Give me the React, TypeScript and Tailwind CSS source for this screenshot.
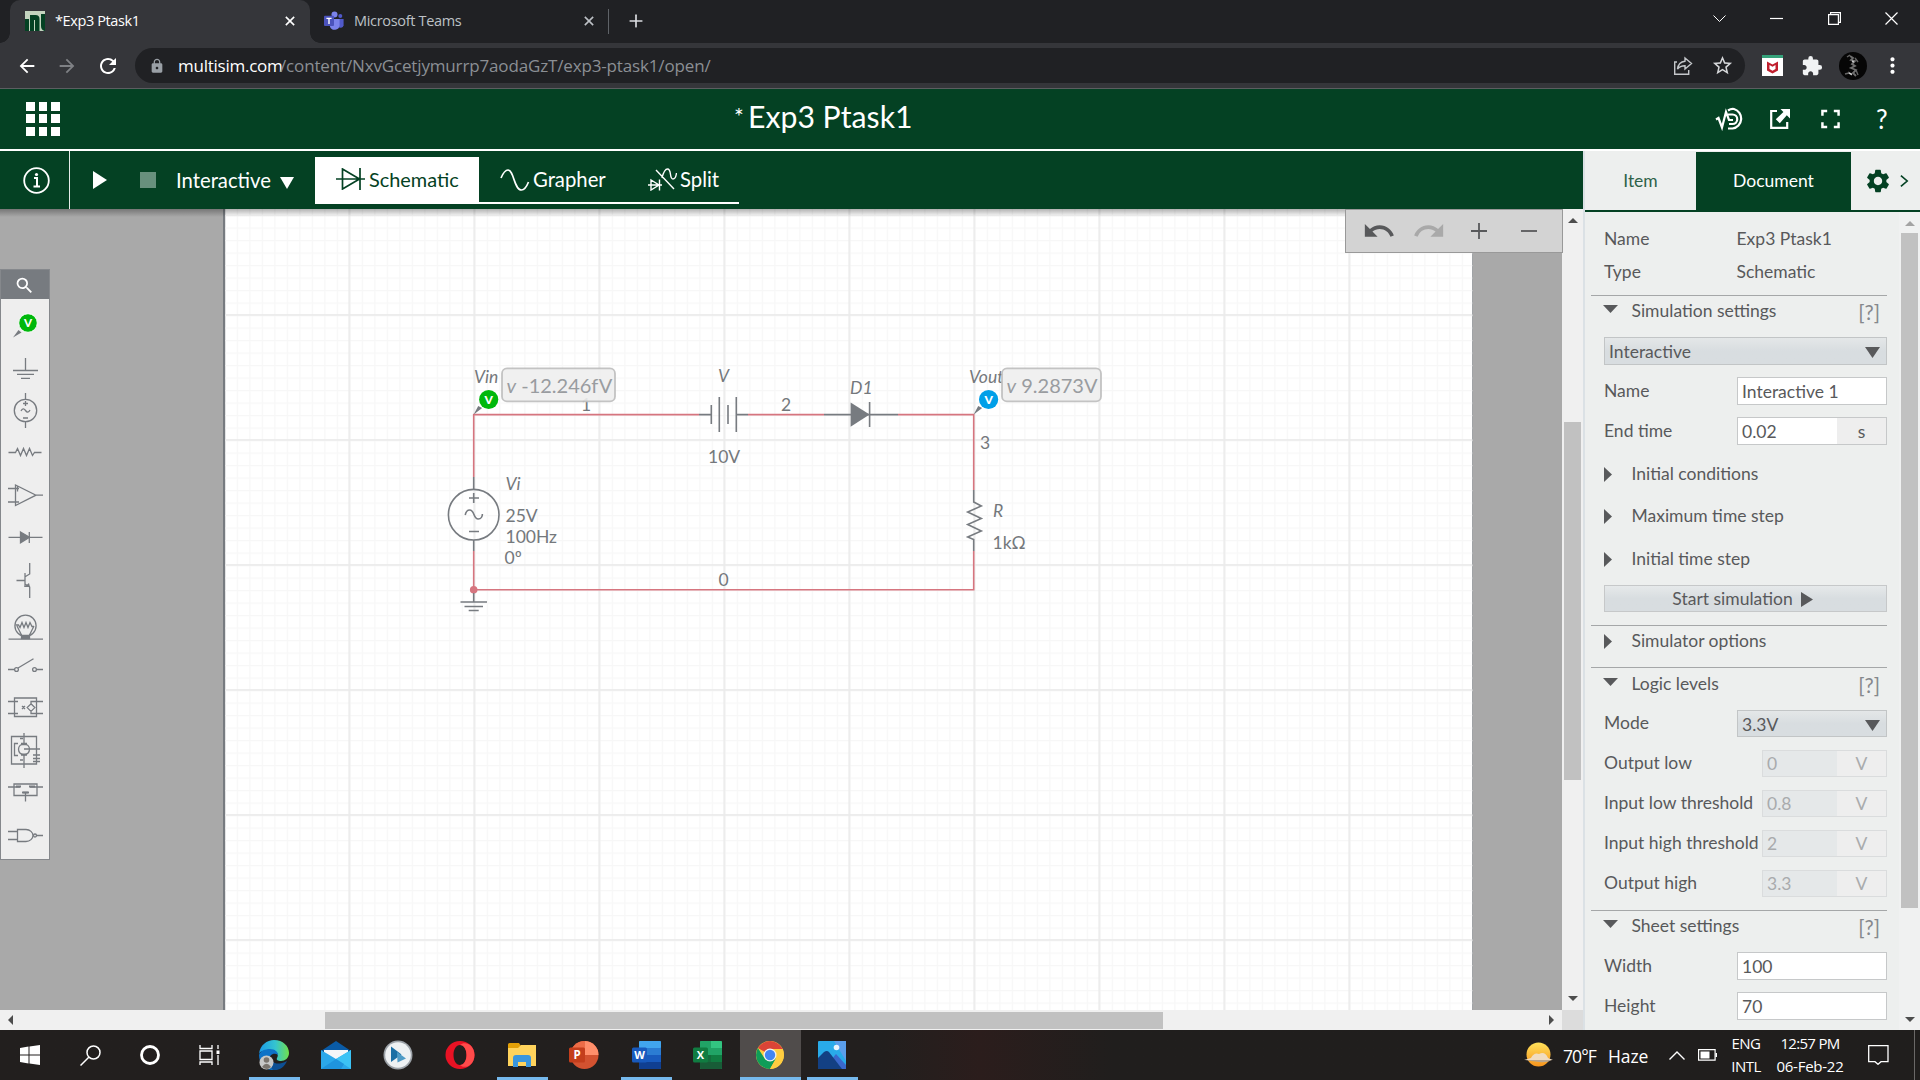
import React from "react";
import { LuPlus } from "react-icons/lu";
import { MdArrowBack, MdArrowForward, MdRefresh, MdLock, MdStarBorder, MdExtension, MdMoreVert, MdUndo, MdRedo, MdSettings, MdSearch } from "react-icons/md";

const UI = "font-['Open_Sans',sans-serif]";
const LATO = "font-['Lato',sans-serif]";

/* ---------- browser chrome ---------- */

function CloseX({ className }: { className: string }) {
  return (
    <svg className={className} viewBox="0 0 12 12" fill="none" stroke="currentColor" strokeWidth="1.9">
      <path d="M1 1l10 10M11 1L1 11" />
    </svg>
  );
}

function TeamsIcon() {
  return (
    <svg className="h-5 w-5" viewBox="0 0 20 20">
      <circle cx="16.3" cy="5" r="2" fill="#5059c9" />
      <path d="M14 8h5.6v6.2a3 3 0 0 1-5.6 1z" fill="#5059c9" />
      <circle cx="10.5" cy="3.4" r="3" fill="#7b83eb" />
      <path d="M6 8h9.6v6.5a5 5 0 0 1-9.6 1.2z" fill="#7b83eb" />
      <rect x="0" y="4.7" width="10" height="10.3" rx="1" fill="#4b53bc" />
      <path d="M2.4 7.4h5.2M5 7.4v5.6" stroke="#fff" strokeWidth="1.4" />
    </svg>
  );
}

function TabStrip() {
  return (
    <div className={`flex h-[43px] items-center bg-[#202124] ${UI} text-[14.5px]`}>
      <div className="relative ml-[10px] flex h-full w-[300px] items-center rounded-t-[10px] bg-[#35363a] pl-[15px] text-white">
        <div className="absolute bottom-0 -left-[10px] h-[10px] w-[10px] bg-[radial-gradient(circle_at_0_0,#202124_9.5px,#35363a_10px)]" />
        <div className="absolute bottom-0 -right-[10px] h-[10px] w-[10px] bg-[radial-gradient(circle_at_100%_0,#202124_9.5px,#35363a_10px)]" />
        <svg className="mb-[2px] h-5 w-5" viewBox="0 0 20 20">
          <rect width="20" height="20" fill="#c3d4bf" />
          <path d="M0 8h4v12H0zM5 4h5.500a4 4 0 0 1 4 4v12h-4.500V9H9v11H5z" fill="#044123" />
          <path d="M16 3h4v17h-.5q-3.500-1-3.500-5z" fill="#044123" />
        </svg>
        <span className="mb-[2px] ml-[10px] whitespace-nowrap tracking-[-0.4px]">*Exp3 Ptask1</span>
        <CloseX className="absolute left-[275px] top-[16px] h-[10px] w-[10px]" />
      </div>
      <div className="ml-[14px] flex h-full w-[284px] items-center pb-[2px] text-[#bdc1c6]">
        <TeamsIcon />
        <span className="ml-[10px] w-[230px] whitespace-nowrap tracking-[-0.32px]">Microsoft Teams</span>
        <CloseX className="h-[10px] w-[10px] shrink-0" />
      </div>
      <div className="h-[25px] w-px bg-[#5f6368]" />
      <LuPlus className="mb-[1px] ml-[17px] h-5 w-5 text-[#dadce0]" />
      <div className="mr-[22px] ml-auto flex items-center gap-[44.500px] pb-[6px] text-white">
        <svg className="h-[13px] w-[13px]" viewBox="0 0 13 13" fill="none" stroke="currentColor" strokeWidth="1"><path d="M.5 3.500l6 6 6-6" /></svg>
        <svg className="h-[13px] w-[13px]" viewBox="0 0 13 13" fill="none" stroke="currentColor" strokeWidth="1.200"><path d="M0 6.500h13" /></svg>
        <svg className="h-[13px] w-[13px]" viewBox="0 0 13 13" fill="none" stroke="currentColor" strokeWidth="1.200"><path d="M.6 2.600h9.800v9.800H.6zM2.600 2.600v-2h9.800v9.800h-2" /></svg>
        <svg className="h-[13px] w-[13px]" viewBox="0 0 13 13" fill="none" stroke="currentColor" strokeWidth="1.200"><path d="M.5.5l12 12M12.500.5l-12 12" /></svg>
      </div>
    </div>
  );
}

function AddressBar() {
  return (
    <div className={`flex h-[46px] items-center border-b border-[#5c5e61] bg-[#35363a] pl-[16px] ${UI}`}>
      <MdArrowBack className="h-[22px] w-[22px] text-white" />
      <MdArrowForward className="ml-[18px] h-[22px] w-[22px] text-[#7f8185]" />
      <MdRefresh className="ml-[18px] h-[24px] w-[24px] text-white" />
      <div className="ml-[15px] flex h-[35px] w-[1610px] items-center rounded-full bg-[#202124] pl-[14px]">
        <MdLock className="h-[16px] w-[16px] text-[#9aa0a6]" />
        <span className="ml-[13px] w-[102px] whitespace-nowrap text-[17px] tracking-[-0.25px] text-white">multisim.com</span>
        <span className="whitespace-nowrap text-[17px] tracking-[-0.15px] text-[#8b8f94]">/content/NxvGcetjymurrp7aodaGzT/exp3-ptask1/open/</span>
        <svg className="ml-auto h-[20px] w-[20px] text-[#c4c7ca]" viewBox="0 0 20 20" fill="none" stroke="currentColor" strokeWidth="1.400">
          <path d="M4 6H1.700v12.300h14V14" />
          <path d="M12 2l6.500 5.500L12 13v-3.200c-3.500 0-5.800 1-7.500 3.400C5 9 7.500 5.600 12 5.200z" />
        </svg>
        <MdStarBorder className="mr-[11px] ml-[18px] h-[23px] w-[23px] text-[#d5d7d9]" />
      </div>
      <div className="ml-[17px] flex h-[21px] w-[21px] items-center justify-center border-t-[3px] border-[#35a27a] bg-white">
        <svg className="h-[13px] w-[13px]" viewBox="0 0 13 13"><path d="M1 0.500l5.500 3 5.500-3v9L6.500 12.500 1 9.500zM3.500 4v4l3 1.800 3-1.800V4l-3 1.800z" fill="#c01f2e" fillRule="evenodd" /></svg>
      </div>
      <MdExtension className="ml-[18px] h-[22px] w-[22px] text-[#f1f3f4]" />
      <svg className="ml-[16px] h-7 w-7" viewBox="0 0 28 28">
        <circle cx="14" cy="14" r="14" fill="#060606" />
        <path d="M11 4l3 2-2 2 4 1-3 3 3 2-4 2 5 2-3 3 3 3" fill="none" stroke="#6f6f6f" strokeWidth="1.800" />
        <path d="M8 5l3-2M16 6l3 4M9 20l4 3M17 18l2 5M6 22l4-1" fill="none" stroke="#666" strokeWidth="1.400" />
        <path d="M13 9l2 1M10 21l3 1.500" stroke="#c8c8c8" strokeWidth="1.400" />
      </svg>
      <MdMoreVert className="ml-[13px] h-[25px] w-[25px] text-white" />
    </div>
  );
}

/* ---------- application header ---------- */

function AppHeader() {
  return (
    <div className={`relative flex h-[62px] items-center justify-between border-b-2 border-white bg-[#044123] pr-[32px] pl-[26px] text-white ${LATO}`}>
      <div className="mb-[1px] grid grid-cols-3 gap-x-[4.200px] gap-y-[3.500px]">
        {Array.from({ length: 9 }, (_, i) => <div key={i} className="h-[9px] w-[8.500px] bg-white" />)}
      </div>
      <div className="absolute top-[7px] left-[734px] flex whitespace-nowrap">
        <span className="mt-[4px] w-[14px] text-[23px] leading-[32px]">*</span>
        <span className="mt-[2px] text-[30.200px] leading-[36px]">Exp3 Ptask1</span>
      </div>
      <div className="flex items-center">
        <svg className="h-[24px] w-[30px]" viewBox="0 0 30 24" fill="none" stroke="#fff" strokeWidth="2.200">
          <path d="M1 12.500l2.500-1.500L7 20.500 11 5l3 8h4M13 3.500q3-2 6-1.500a10 10 0 0 1-1.500 19.500h-4.500M13 7.500h4.500a4.700 4.700 0 0 1 0 9.500H14" />
        </svg>
        <svg className="ml-[25px] h-[20px] w-[20px]" viewBox="0 0 20 20">
          <path d="M7 2H1.200v16.800h16V13" fill="none" stroke="#fff" strokeWidth="2.200" />
          <path d="M10.500 0H20v9.500l-3.200-3.200-7 8-4-4 7.600-7.400z" fill="#fff" />
        </svg>
        <svg className="ml-[31px] h-[20px] w-[19px]" viewBox="0 0 20 20" fill="none" stroke="#fff" strokeWidth="2.600">
          <path d="M1.500 6.500v-5h5M13.500 1.500h5v5M18.500 13.500v5h-5M6.500 18.500h-5v-5" />
        </svg>
        <span className="mb-[1px] ml-[36px] w-[12px] text-[26px] leading-none">?</span>
      </div>
    </div>
  );
}

function MainToolbar() {
  return (
    <div className={`flex h-[58px] bg-[#044123] text-[20px] text-white ${LATO}`}>
      <div className="flex w-[70px] items-center border-r border-white/90 pl-[23px]">
        <svg className="h-[27px] w-[27px]" viewBox="0 0 27 27" fill="none" stroke="#fff">
          <circle cx="13.500" cy="13.500" r="12.300" strokeWidth="1.800" />
          <path d="M11 11h3v9M10.500 19.500h6.500" strokeWidth="2" />
          <circle cx="13.500" cy="7.500" r="1.600" fill="#fff" stroke="none" />
        </svg>
      </div>
      <svg className="mt-[20px] ml-[23px] h-[18px] w-[14px]" viewBox="0 0 14 18"><path d="M0 0l14 9-14 9z" fill="#fff" /></svg>
      <div className="mt-[21px] ml-[33px] h-[16px] w-[16px] bg-[#68907d]" />
      <span className="ml-[20px] flex w-[97px] items-center text-[20.300px]">Interactive</span>
      <svg className="mt-[26px] ml-[7px] h-[12px] w-[14px]" viewBox="0 0 14 12"><path d="M0 0h14L7 12z" fill="#fff" /></svg>
      <div className="mt-[6px] ml-[21px] flex h-[47px] w-[164px] items-center bg-white pl-[21px] text-[#044123]">
        <svg className="mb-[3px] h-[22px] w-[29px]" viewBox="0 0 29 22" fill="none" stroke="currentColor" strokeWidth="1.700"><path d="M0 11h29M6.500 1v20L23.500 11zM24 0v22" /></svg>
        <span className="mb-[2px] ml-[4px] text-[19.900px]">Schematic</span>
      </div>
      <div className="mt-[6px] flex h-[47px] w-[260px] items-center border-b-2 border-white pl-[21px]">
        <svg className="h-[22px] w-[30px]" viewBox="0 0 30 22" fill="none" stroke="#fff" strokeWidth="1.700"><path d="M1 9C4 2 6.500 1 8 1c6 0 6 20 13.500 20 3 0 5-3 7-8" /></svg>
        <span className="ml-[3px] w-[115px] text-[20.300px]">Grapher</span>
        <svg className="h-[23px] w-[29px]" viewBox="0 0 29 23" fill="none" stroke="#fff" strokeWidth="1.400"><path d="M0 17h14M3 12v10l8-5zM11.500 11.500v11M8 2l18 19M14 10C16 2 18 1 19.500 1 24 1 21 11 25 11c2 0 3-2 3.500-6" /></svg>
        <span className="ml-[3px] text-[20.300px]">Split</span>
      </div>
    </div>
  );
}

/* ---------- schematic canvas ---------- */

function Schematic() {
  const wire = "#d6757f";
  const part = "#777b80";
  return (
    <svg className="block h-[801px] w-[1562px] bg-[#a9a9a9]" viewBox="0 209 1562 801">
      <defs>
        <pattern id="minor" x="224.300" y="315" width="12.500" height="12.500" patternUnits="userSpaceOnUse">
          <path d="M0 0H12.500M0 0V12.500" stroke="#f7f7f7" strokeWidth="2.400" />
        </pattern>
        <pattern id="major" x="223.400" y="189.100" width="125" height="125" patternUnits="userSpaceOnUse">
          <path d="M0 .9H125M.9 0V125" stroke="#ebebeb" strokeWidth="1.700" />
        </pattern>
        <linearGradient id="shade" x2="0" y2="1">
          <stop offset="0" stopColor="#000" stopOpacity=".3" />
          <stop offset="1" stopColor="#000" stopOpacity="0" />
        </linearGradient>
      </defs>
      <rect x="223" y="209" width="1250" height="801" fill="#777b80" />
      <rect x="225.300" y="209" width="1247" height="801" fill="#fff" />
      <rect x="225.300" y="209" width="1247" height="801" fill="url(#minor)" />
      <rect x="225.300" y="209" width="1247" height="801" fill="url(#major)" />
      <rect x="0" y="209" width="1562" height="8" fill="url(#shade)" />

      <g fill="none" stroke={wire} strokeWidth="1.600">
        <path d="M473.700 477V414.600H699M748 414.600H824M898 414.600H973.700V490M973.700 551V589.700H473.700V551" />
      </g>
      <circle cx="473.700" cy="589.700" r="3.800" fill={wire} />

      <g fill="none" stroke={part} strokeWidth="1.600">
        <path d="M473.700 477v12M473.700 540v11M469 498h10M473.700 493v10M469 531.500h10" />
        <circle cx="473.700" cy="514.700" r="25.300" />
        <path d="M465.200 515q1-5 4.500-5c5 0 3.500 9 8.500 9 3 0 4.200-3 4.200-5" />
        <path d="M473.700 593v9M460.500 602H487M464.500 606.500h18.500M468.700 610.500h10" />
        <path d="M699 414.600h12.300M736 414.600h12M711.300 405v19M719.300 397v35M728 405v19M736.300 397v35" />
        <path d="M824 414.600h74M869.600 402v25" />
        <path d="M850.600 402.500l19 12-19 12.200z" fill={part} stroke="none" />
        <path d="M973.700 490v12l7.600 4-13.600 6 13.600 6.500-13.600 6 13.600 6.500-13.600 6 6 2.600V551" />
      </g>

      <g fontFamily="Lato, sans-serif" fontSize="17.500" fill="#74787c">
        <g fontStyle="italic">
          <text x="474" y="383">Vin</text>
          <text x="505.500" y="490">Vi</text>
          <text x="718" y="382">V</text>
          <text x="850" y="394">D1</text>
          <text x="969" y="383">Vout</text>
          <text x="993" y="517">R</text>
        </g>
        <text x="581" y="411">1</text>
        <text x="781" y="411">2</text>
        <text x="980" y="449">3</text>
        <text x="718.500" y="586">0</text>
        <text x="708" y="463">10V</text>
        <text x="505.500" y="522">25V</text>
        <text x="505.500" y="543">100Hz</text>
        <text x="504.500" y="564">0º</text>
        <text x="992.500" y="549">1kΩ</text>
      </g>

      <path d="M473.700 414.600l4.500-8.500 4 2z" fill={part} />
      <path d="M973.700 414.600l4.500-8.500 4 2z" fill={part} />
      <circle cx="488.700" cy="399.500" r="9.600" fill="#00b80c" />
      <circle cx="988.600" cy="399.500" r="9.600" fill="#009fe8" />
      <g fontFamily="Lato, sans-serif" fontSize="12" fontWeight="900" fill="#fff" textAnchor="middle">
        <text x="488.700" y="403.500">V</text>
        <text x="988.600" y="403.500">V</text>
      </g>

      <g fill="#eeeeee" fillOpacity=".9" stroke="#bcbcbc" strokeOpacity=".9" strokeWidth="1.800">
        <rect x="502" y="368.400" width="113" height="33" rx="5" />
        <rect x="1002" y="368.400" width="99" height="33" rx="5" />
      </g>
      <g fontFamily="Lato, sans-serif" fontSize="20" fill="#999ca0">
        <text x="506.500" y="393"><tspan fontStyle="italic">v</tspan> -12.246fV</text>
        <text x="1006.500" y="393"><tspan fontStyle="italic">v</tspan> 9.2873V</text>
      </g>
    </svg>
  );
}

function Palette() {
  return (
    <div className="absolute top-[60px] left-0 h-[591px] w-[50px] border border-[#85888c] bg-[#eeeeee]">
      <div className="flex h-[29px] items-center justify-center bg-[#777b80]">
        <MdSearch className="mt-[2px] mr-[1px] h-[21px] w-[21px] text-white" />
      </div>
      <svg className="block h-[560px] w-[48px]" viewBox="1 299 48 560" fill="none" stroke="#777b80" strokeWidth="1.300">
        <path d="M13 337.500l5.500-7.500 3 2.500z" fill="#777b80" stroke="none" />
        <circle cx="28" cy="323" r="9.300" fill="#00b80c" stroke="#fff" strokeWidth="1" />
        <text x="28" y="327" fontFamily="Lato, sans-serif" fontWeight="900" fontSize="11.500" textAnchor="middle" fill="#fff" stroke="none">V</text>
        <path d="M25.500 358v12.500M13 370.500h25M17 374.300h17M21 378.300h9" />
        <circle cx="25.500" cy="410.500" r="11.200" />
        <path d="M25.500 393v6M25.500 422v6M23 403.500h5M25.500 401v5M23 418h5M21 411q2-4 4.500-.5t4.500-.5" />
        <path d="M8.500 452.500h7l2-4 3 7 3-7 3 7 3-7 3 7 2-3h7" />
        <path d="M15.500 485v20.500L36 495.200zM36 495.200h7M8 488.500h11M8 502h11M17.500 486.500v5" />
        <path d="M8.500 537.300h34M29.300 532v11" /><path d="M20.500 532l9 5.300-9 5.500z" fill="#777b80" />
        <path d="M29.700 563v11l-5 3M25 573v14M16.500 580.500H25M25 584l4.700 3V598" /><path d="M24 587l6 0-1-4z" fill="#777b80" stroke="none" />
        <circle cx="25.500" cy="625.700" r="10.600" /><path d="M8.500 639.200h34.500M15.500 625h3l1.500 2.500 2-5 2 5 2-5 2 5 2-5 2 4h2M17 626l5 10M34 626l-5 10" /><path d="M21.500 635.500h8v3h-8z" fill="#777b80" />
        <path d="M8 669.500h6.500M18 668l15.500-9.200M36.500 669.500h6.500" /><circle cx="16.500" cy="669.500" r="1.900" /><circle cx="34.500" cy="669.500" r="1.900" />
        <path d="M14.500 698h22v18.500h-22zM8 701.500h10M8 713.500h10M31 704v-2.500h12M31 711v2.500h12M31 703.800l3.800 3.800-3.800 3.800-3.800-3.800zM22 706l3 3M25 706l-3 3" />
        <path d="M11.500 736.500h25V764h-25zM24 733v11M24 754.500V768M24 749h16M18 743.500h-3.500v12H18M33 755h7M33 758.500h7M33 761.500h7M20 738.500h3M20 760h3" /><circle cx="24" cy="749.300" r="5.500" /><path d="M21 744h6M21 754.600h6" strokeWidth="2.400" />
        <path d="M14 784h23v11.500H14zM8 787h12M30 787h13M25.500 792v9.500M22 792.500h7" /><path d="M16 786.500h5M29 786.500h6M22.500 792.500h6" strokeWidth="2.200" />
        <path d="M17.500 829.500h8.500c4 0 7 3 7 6s-3 6-7 6h-8.500zM8 831.500h9.500M8 839.500h9.500M36.500 835.500H43" /><circle cx="35" cy="835.500" r="1.500" />
      </svg>
    </div>
  );
}

function Arrow({ d, className }: { d: "up" | "down" | "left" | "right"; className?: string }) {
  const p = { up: "M0 7L5 2l5 5z", down: "M0 3l5 5 5-5z", left: "M8 0L3 5l5 5z", right: "M2 0l5 5-5 5z" }[d];
  return <svg className={`h-[10px] w-[10px] ${className ?? ""}`} viewBox="0 0 10 10" fill="currentColor"><path d={p} /></svg>;
}

function CanvasArea() {
  return (
    <div className="grid h-[821px] w-[1583px] grid-cols-[1562px_21px] grid-rows-[801px_20px]">
      <div className="relative overflow-hidden">
        <Schematic />
        <Palette />
      </div>
      <div className="flex flex-col items-center bg-[#f0f0f0] text-[#4d4d4d]">
        <div className="absolute top-[209px] left-[1345px] z-10 flex h-[44px] w-[218px] items-center border border-[#999999] bg-[#d3d3d3] text-[#58595b]">
          <MdUndo className="ml-[16px] h-[34px] w-[34px]" />
          <MdRedo className="ml-[16px] h-[34px] w-[34px] text-[#a9a9a9]" />
          <svg className="ml-[25px] h-[16px] w-[16px]" viewBox="0 0 16 16"><path d="M0 8h16M8 0v16" stroke="currentColor" strokeWidth="1.800" /></svg>
          <svg className="ml-[34px] h-[16px] w-[16px]" viewBox="0 0 16 16"><path d="M0 8h16" stroke="currentColor" strokeWidth="1.800" /></svg>
        </div>
        <Arrow d="up" className="mt-[7px]" />
        <div className="mt-[196px] h-[358px] w-[17px] bg-[#c1c1c1]" />
        <Arrow d="down" className="mt-[213px]" />
      </div>
      <div className="flex items-center bg-[#f0f0f0] text-[#4d4d4d]">
        <Arrow d="left" className="ml-[5px]" />
        <div className="ml-[310px] h-[17px] w-[838px] bg-[#c1c1c1]" />
        <Arrow d="right" className="ml-[384px]" />
      </div>
      <div className="bg-[#dcdcdc]" />
    </div>
  );
}

/* ---------- property panel ---------- */

function Rule({ className }: { className: string }) {
  return <div className={`-ml-[13px] h-px bg-[#a5a7a8] ${className}`} />;
}

function Section({ title, open, help, className }: { title: string; open?: boolean; help?: boolean; className: string }) {
  return (
    <div className={`flex items-center ${className}`}>
      <div className="w-[27.500px]">
        {open ? (
          <svg className="-mt-[5px] -ml-px h-[8px] w-[15px]" viewBox="0 0 15 8"><path d="M0 0h15L7.500 8z" fill="#58595b" /></svg>
        ) : (
          <svg className="h-[15px] w-[8px]" viewBox="0 0 8 15"><path d="M0 0l8 7.500L0 15z" fill="#58595b" /></svg>
        )}
      </div>
      <span>{title}</span>
      {help && <span className="mt-[3px] mr-[7px] ml-auto text-[20.500px] leading-none text-[#85888c]">[?]</span>}
    </div>
  );
}

function Select({ value, className }: { value: string; className: string }) {
  return (
    <div className={`flex items-center justify-between border border-[#c2c5c6] bg-linear-to-b from-[#e4e7e8] via-[#d8dde0] to-[#d8dde0] pr-[6px] pl-[4px] pt-[3px] ${className}`}>
      <span>{value}</span>
      <svg className="h-[11px] w-[15px]" viewBox="0 0 15 11"><path d="M0 0h15L7.500 11z" fill="#58595b" /></svg>
    </div>
  );
}

function Field({ label, value, unit, className }: { label: string; value: string; unit?: string; className: string }) {
  return (
    <div className={`flex h-[28px] ${className}`}>
      <span className="flex w-[133px] items-center">{label}</span>
      <div className="flex w-[150px] items-center border border-[#c6c8c9] bg-white pl-[4px]">
        <span className="flex-1 pt-[2px]">{value}</span>
        {unit && <span className="flex h-full w-[49px] items-center justify-center bg-[#eeeeee] pt-[2px]">{unit}</span>}
      </div>
    </div>
  );
}

function DisabledField({ label, value }: { label: string; value: string }) {
  return (
    <div className="mt-[13px] flex h-[27px]">
      <span className="flex w-[158px] items-center whitespace-nowrap">{label}</span>
      <div className="flex w-[125px] items-center border border-[#dadcdd] bg-[#e5e8e9] pl-[4px] text-[#a9abad]">
        <span className="flex-1 pt-[2px]">{value}</span>
        <span className="flex h-full w-[49px] items-center justify-center bg-[#eeeeee] pt-[2px]">V</span>
      </div>
    </div>
  );
}

function PropertyPanel() {
  return (
    <div className={`h-[879px] w-[337px] border-l-2 border-[#dbe1e5] bg-[#edefee] text-[17.500px] text-[#58595b] ${LATO}`}>
      <div className="flex h-[61px] border-b-2 border-[#044123] text-[#044123]">
        <div className="flex w-[111px] items-center justify-center pt-[2px] text-[#2f6249]">Item</div>
        <div className="mt-px flex w-[155px] items-center justify-center bg-[#044123] text-white">Document</div>
        <MdSettings className="mt-[16px] ml-[13px] h-[28px] w-[28px]" />
        <svg className="mt-[23px] ml-[8px] h-[14px] w-[9px]" viewBox="0 0 10 14" fill="none" stroke="currentColor" strokeWidth="1.800"><path d="M1 1l7 6-7 6" /></svg>
      </div>
      <div className="flex h-[818px]">
        <div className="w-[302px] pt-[11px] pl-[19px]">
          <div className="flex h-[32px] items-center"><span className="w-[132.500px]">Name</span><span>Exp3 Ptask1</span></div>
          <div className="flex h-[33px] items-center pt-[2px]"><span className="w-[132.500px]">Type</span><span>Schematic</span></div>
          <Rule className="mt-[7px]" />
          <Section title="Simulation settings" open help className="h-[30px]" />
          <Select value="Interactive" className="mt-[11px] h-[28px]" />
          <Field label="Name" value="Interactive 1" className="mt-[12px]" />
          <Field label="End time" value="0.02" unit="s" className="mt-[12px]" />
          <Section title="Initial conditions" className="mt-[8px] h-[42px]" />
          <Section title="Maximum time step" className="h-[43px]" />
          <Section title="Initial time step" className="h-[43px]" />
          <div className="mt-[4px] flex h-[27px] items-center justify-center border border-[#c6c8c9] bg-linear-to-b from-[#e6e9ea] via-[#d8dde0] to-[#d8dde0] pt-[1px] pr-[6px]">
            <span>Start simulation</span>
            <svg className="ml-[8px] h-[15px] w-[12px]" viewBox="0 0 12 15"><path d="M0 0l12 7.500L0 15z" fill="#58595b" /></svg>
          </div>
          <Rule className="mt-[13px]" />
          <Section title="Simulator options" className="h-[30px]" />
          <Rule className="mt-[11px]" />
          <Section title="Logic levels" open help className="h-[32px]" />
          <div className="mt-[10px] flex h-[27px]">
            <span className="flex w-[133px] items-center">Mode</span>
            <Select value="3.3V" className="w-[150px]" />
          </div>
          <DisabledField label="Output low" value="0" />
          <DisabledField label="Input low threshold" value="0.8" />
          <DisabledField label="Input high threshold" value="2" />
          <DisabledField label="Output high" value="3.3" />
          <Rule className="mt-[13px]" />
          <Section title="Sheet settings" open help className="h-[30px]" />
          <Field label="Width" value="100" className="mt-[11px]" />
          <Field label="Height" value="70" className="mt-[12px]" />
        </div>
        <div className="ml-[12px] flex w-[21px] flex-col items-center bg-[#f0f1f1] text-[#4d4d4d]">
          <Arrow d="up" className="mt-[7px] text-[#a3a3a3]" />
          <div className="mt-[4px] h-[675px] w-[17px] bg-[#c1c1c1]" />
          <Arrow d="down" className="mt-[106px]" />
        </div>
      </div>
    </div>
  );
}

/* ---------- taskbar ---------- */

function Task({ className, children, running }: { className: string; children: React.ReactNode; running?: boolean }) {
  return (
    <div className={`flex h-full flex-col items-center ${className}`}>
      <div className="flex h-[47px] items-center pt-[3px] pr-[1px]">{children}</div>
      {running && <div className="h-[3px] w-full bg-[#76b9ed]" />}
    </div>
  );
}

function OfficeIcon({ letter, tones, tile }: { letter: string; tones: string[]; tile: string }) {
  return (
    <svg className="h-[28px] w-[29px]" viewBox="0 0 29 28">
      <rect x="7" y="0" width="22" height="28" rx="1.500" fill={tones[1]} />
      <rect x="7" y="0" width="22" height="7" rx="1" fill={tones[0]} />
      <rect x="7" y="14" width="22" height="7" fill={tones[2]} />
      <path d="M7 21h22v5.500a1.500 1.500 0 0 1-1.500 1.500h-19A1.500 1.500 0 0 1 7 26.500z" fill={tones[3]} />
      {letter === "X" && <path d="M18 0h9.500A1.500 1.500 0 0 1 29 1.500V7H18z" fill="#33c481" />}
      {letter === "X" && <path d="M7 14h11v7H7z" fill="#185c37" fillOpacity=".5" />}
      <rect x="0" y="6.500" width="15" height="15" rx="1.500" fill={tile} />
      <text x="7.500" y="18" fontFamily="'Open Sans', sans-serif" fontWeight="700" fontSize="11" textAnchor="middle" fill="#fff">{letter}</text>
    </svg>
  );
}

function Taskbar() {
  return (
    <div className={`flex h-[50px] w-[1920px] bg-[#221f1e] bg-linear-to-r from-[#221f1e] from-46% via-[#2b1d1c] via-51% to-[#201e1d] to-58% text-white ${UI}`}>
      <Task className="w-[61px]">
        <svg className="h-[20px] w-[20px]" viewBox="0 0 20 20" fill="#fff"><path d="M0 3l8.500-1.400V9.500H0zM9.500 1.400L20 0v9.500H9.500zM0 10.500h8.500v8L0 17zM9.500 10.500H20V20L9.500 18.600z" /></svg>
      </Task>
      <Task className="w-[59px]">
        <svg className="h-[21px] w-[21px]" viewBox="0 0 21 21" fill="none" stroke="#fff" strokeWidth="1.500"><circle cx="13.500" cy="7.500" r="6.500" /><path d="M9 12L.5 20.500" /></svg>
      </Task>
      <Task className="w-[60px]">
        <svg className="h-[20px] w-[20px]" viewBox="0 0 20 20"><circle cx="10" cy="10" r="8.500" fill="none" stroke="#fff" strokeWidth="2.800" /></svg>
      </Task>
      <Task className="w-[58px] pl-[2px]">
        <svg className="h-[20px] w-[21px]" viewBox="0 0 21 20" fill="none" stroke="#fff" strokeWidth="1.300"><path d="M1 0v3.500h12V0M1 6h12v8.500H1zM1 20v-3h12v3M19 0v4M19 10v10" /><path d="M19 5.500v3.500" strokeWidth="3" /></svg>
      </Task>
      <Task className="ml-[11px] w-[51px]" running>
        <svg className="h-[30px] w-[30px]" viewBox="0 0 30 30">
          <defs>
            <linearGradient id="eg"><stop offset="0" stopColor="#1a9be8" /><stop offset=".55" stopColor="#35c4cf" /><stop offset="1" stopColor="#70e04c" /></linearGradient>
          </defs>
          <path d="M0 14C1 5 8 0 15 0c9 0 15 6 15 13 0 5-4 8-8 8-3 0-5-1-4-3 2-3 0-8-6-8C6 10 1 11 0 14z" fill="url(#eg)" />
          <path d="M0 15c1-4 6-6 11-6 5 0 8 3 8 6-4-3-9 0-9 5 0 4 2 8 6 10C7 31 0 24 0 15z" fill="#0d72c8" />
          <path d="M12 17c0 6 6 9 16 4-3 7-9 10-14 9-4-3-5-9-2-13z" fill="#0d4f93" />
          <circle cx="7.500" cy="22.500" r="7" fill="#c8c8c8" /><circle cx="7.500" cy="20" r="2.800" fill="#7a746e" /><path d="M3 27q4.500-6.500 9 0-4 4-9 0z" fill="#7a746e" />
        </svg>
      </Task>
      <Task className="ml-[11px] w-[51px]">
        <svg className="h-[28px] w-[30px]" viewBox="0 0 30 28"><path d="M0 10L15 0l15 10z" fill="#0a5ba6" /><path d="M3 9h24v9H3z" fill="#f4f6f8" /><path d="M0 9l15 9 15-9v19H0z" fill="#2ba8ea" /><path d="M15 18l15-9v19z" fill="#3cc3f5" /><path d="M0 28l15-10 8 5-3 5z" fill="#1f94dd" /></svg>
      </Task>
      <Task className="ml-[11px] w-[51px]">
        <svg className="h-[30px] w-[30px]" viewBox="0 0 30 30"><circle cx="15" cy="15" r="14.500" fill="#9ca2a8" /><circle cx="15" cy="15" r="12.800" fill="#eef1f3" /><path d="M8 6.500l10.500 8L8 22z" fill="#1b6fa5" /><path d="M14 12l9 6.500-8.500 4z" fill="#4f9bc6" /></svg>
      </Task>
      <Task className="ml-[11px] w-[51px]">
        <svg className="h-[28px] w-[30px]" viewBox="0 0 30 28"><path fillRule="evenodd" d="M15 0a14.500 14 0 1 0 0 28 14.500 14 0 1 0 0-28zm0 4c4 0 6.500 4.500 6.500 10s-2.500 10-6.500 10-6.500-4.500-6.500-10S11 4 15 4z" fill="#e81224" /><path d="M15 4c4 0 6.500 4.500 6.500 10s-2.500 10-6.500 10c4 4 14 2 14.500-10C29 2 19 0 15 4z" fill="#ff4b4b" /></svg>
      </Task>
      <Task className="ml-[11px] w-[51px]" running>
        <svg className="h-[24px] w-[28px]" viewBox="0 0 28 24"><path d="M0 1.500A1.500 1.500 0 0 1 1.500 0H11l2 3v4H0z" fill="#e3a007" /><path d="M0 5h10l3-3h15v21H0z" fill="#ffd35c" /><path d="M5 24v-9a3 3 0 0 1 3-3h12a3 3 0 0 1 3 3v9h-5v-5h-8v5z" fill="#3a96dd" /></svg>
      </Task>
      <Task className="ml-[11px] w-[51px]">
        <svg className="h-[28px] w-[30px]" viewBox="0 0 30 28"><circle cx="15.500" cy="14" r="14" fill="#d35230" /><path d="M15.500 0a14 14 0 0 1 14 14h-14z" fill="#ff8f6b" /><path d="M15.500 14V0a14 14 0 0 0-14 14z" fill="#ed6c47" /><rect x="0" y="6.500" width="16" height="15" rx="1.500" fill="#c43e1c" /><text x="8" y="18" fontFamily="'Open Sans', sans-serif" fontWeight="700" fontSize="11.500" textAnchor="middle" fill="#fff">P</text></svg>
      </Task>
      <Task className="ml-[11px] w-[51px]" running><OfficeIcon letter="W" tones={["#41a5ee", "#2b7cd3", "#185abd", "#103f91"]} tile="#185abd" /></Task>
      <Task className="ml-[10px] w-[51px]"><OfficeIcon letter="X" tones={["#21a366", "#21a366", "#107c41", "#185c37"]} tile="#107c41" /></Task>
      <Task className="ml-[7px] w-[61px] bg-[#504c4b]" running>
        <svg className="h-[28px] w-[28px]" viewBox="0 0 28 28">
          <circle cx="14" cy="14" r="14" fill="#ffcd40" />
          <path d="M14 14L1.900 7A14 14 0 0 1 26.100 7L27 8H14z" fill="#db4437" />
          <path d="M1.900 7A14 14 0 0 0 14 28l6-10.500L9 18z" fill="#0f9d58" />
          <path d="M20 17.500L14 28a14 14 0 0 0 12.500-20H14z" fill="#ffcd40" />
          <circle cx="14" cy="14" r="6.500" fill="#f1f1f1" /><circle cx="14" cy="14" r="5.200" fill="#4285f4" />
        </svg>
      </Task>
      <Task className="ml-[6px] w-[51px]" running>
        <svg className="h-[28px] w-[28px]" viewBox="0 0 28 28"><rect width="28" height="28" rx="1" fill="#29abe9" /><path d="M16 0h12v20z" fill="#5b9fec" /><path d="M14 28V18l4-5 10 11v4z" fill="#3a68cc" /><path d="M0 17l6-6q3-2 5 0l13 17H0z" fill="#134083" /><circle cx="18.500" cy="6.500" r="2.800" fill="#e9f5fc" /></svg>
      </Task>

      <div className="ml-auto flex items-center">
        <svg className="h-[26px] w-[30px]" viewBox="0 0 30 26"><defs><linearGradient id="sun" x2="0" y2="1"><stop offset="0" stopColor="#ffe15a" /><stop offset="1" stopColor="#f7941d" /></linearGradient></defs><circle cx="14.500" cy="12.500" r="12" fill="url(#sun)" /><path d="M7 16q3-6 8-4 6-3 9 4l5 2H0z" fill="#f0dcc0" /><path d="M1 18h27q-5 3-13 2T1 18z" fill="#b8a48c" /></svg>
        <span className="mt-[2px] ml-[9px] w-[45px] text-[17.500px] tracking-[-0.9px]">70°F</span>
        <span className="mt-[2px] w-[61px] text-[17.500px] tracking-[-0.1px]">Haze</span>
        <svg className="h-[9px] w-[16px]" viewBox="0 0 16 9" fill="none" stroke="#fff" strokeWidth="1.400"><path d="M.5 8.500L8 1l7.500 7.500" /></svg>
        <svg className="ml-[13px] h-[12px] w-[19px]" viewBox="0 0 19 12"><path d="M.6.600h16.500v10.500H.6z" fill="none" stroke="#fff" strokeWidth="1.200" /><path d="M2.500 2.500h9v7h-9zM17.500 4H19v4h-1.500z" fill="#fff" /></svg>
        <div className="ml-[13px] w-[32px] text-center text-[15px] leading-[23px] tracking-[-0.5px]"><div>ENG</div><div>INTL</div></div>
        <div className="ml-[12px] w-[72px] text-center text-[15px] leading-[23px] whitespace-nowrap"><div className="tracking-[-0.7px]">12:57 PM</div><div className="tracking-[-0.25px]">06-Feb-22</div></div>
        <svg className="mr-[25px] ml-[22px] h-[20px] w-[21px]" viewBox="0 0 21 20" fill="none" stroke="#fff" strokeWidth="1.300"><path d="M.7.700h19.300v16H13l-3 2.600-3-2.600H.7z" /></svg>
        <div className="mr-[5px] h-[50px] w-px bg-[#6a6867]" />
      </div>
    </div>
  );
}

export default function App() {
  return (
    <div className="h-[1080px] w-[1920px] overflow-hidden bg-[#202124]">
      <TabStrip />
      <AddressBar />
      <AppHeader />
      <div className="flex h-[879px]">
        <div className="w-[1583px]">
          <MainToolbar />
          <CanvasArea />
        </div>
        <PropertyPanel />
      </div>
      <Taskbar />
    </div>
  );
}
